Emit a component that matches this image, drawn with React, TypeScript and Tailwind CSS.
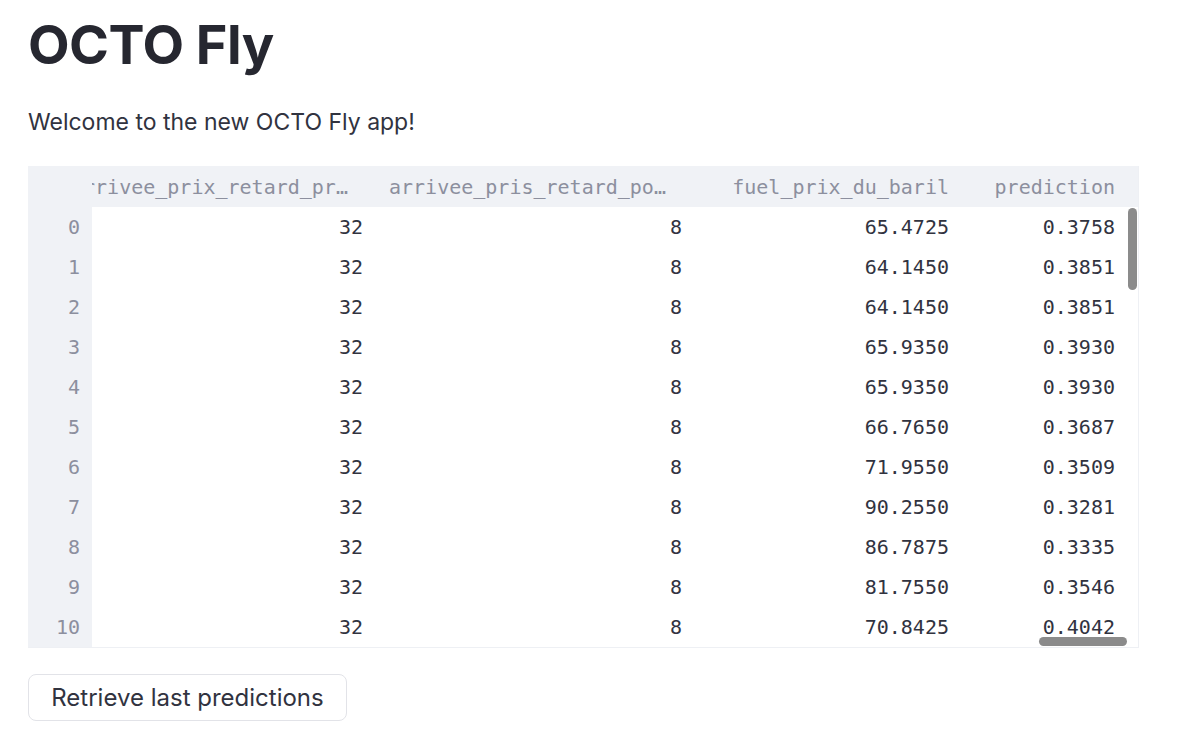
const rows = [
  { fuel: "65.4725", pred: "0.3758" },
  { fuel: "64.1450", pred: "0.3851" },
  { fuel: "64.1450", pred: "0.3851" },
  { fuel: "65.9350", pred: "0.3930" },
  { fuel: "65.9350", pred: "0.3930" },
  { fuel: "66.7650", pred: "0.3687" },
  { fuel: "71.9550", pred: "0.3509" },
  { fuel: "90.2550", pred: "0.3281" },
  { fuel: "86.7875", pred: "0.3335" },
  { fuel: "81.7550", pred: "0.3546" },
  { fuel: "70.8425", pred: "0.4042" },
];

const mono = "font-['DejaVu_Sans_Mono','Liberation_Mono',monospace]";

export default function App() {
  return (
    <div className="min-h-[748px] bg-white px-[28px] pt-[12px] font-['Inter','Noto_Sans',sans-serif] text-[#31333f]">
      <h1 className="text-[54px] font-bold leading-[66px] tracking-[-0.5px] text-[#262730]">
        OCTO Fly
      </h1>
      <p className="mt-[28px] text-[23px] leading-[32px]">Welcome to the new OCTO Fly app!</p>

      <div className="relative mt-[28px] flex w-[1111px] overflow-hidden border-r border-b border-[#eef0f4]">
        {/* index column */}
        <div className={`flex w-[64px] shrink-0 flex-col bg-[#f0f2f6] text-[20px] text-[#8c8f9e] ${mono}`}>
          <div className="h-[41px]" />
          {rows.map((_, i) => (
            <div key={i} className="flex h-[40px] items-center justify-end pr-[12px]">
              {i}
            </div>
          ))}
        </div>

        {/* scrolled data */}
        <div className={`flex-1 overflow-hidden text-[20px] ${mono}`}>
          <div className="ml-[-33px] flex">
            <Column header="arrivee_prix_retard_pr…" width="w-[318px]" values={rows.map(() => "32")} />
            <Column header="arrivee_pris_retard_po…" width="w-[319px]" values={rows.map(() => "8")} />
            <Column header="fuel_prix_du_baril" right width="w-[267px]" values={rows.map((r) => r.fuel)} />
            <Column header="prediction" right width="w-[166px]" values={rows.map((r) => r.pred)} />
            <div className="h-[41px] w-[40px] shrink-0 bg-[#f0f2f6]" />
          </div>
        </div>

        {/* scrollbars */}
        <div className="absolute top-[42px] right-[1px] h-[82px] w-[9px] rounded-full bg-[#8b8b8b]" />
        <div className="absolute right-[11px] bottom-[1px] h-[9px] w-[88px] rounded-full bg-[#8b8b8b]" />
      </div>

      <button className="mt-[26px] h-[47px] w-[319px] rounded-[8px] border border-[#e2e3e8] bg-white text-[24px] text-[#31333f]">
        Retrieve last predictions
      </button>
    </div>
  );
}

function Column({
  header,
  width,
  values,
  right,
}: {
  header: string;
  width: string;
  values: string[];
  right?: boolean;
}) {
  return (
    <div className={`flex shrink-0 flex-col ${width}`}>
      <div
        className={`flex h-[41px] items-center overflow-hidden whitespace-nowrap bg-[#f0f2f6] text-[#8c8f9e] ${
          right ? "justify-end pr-[14px]" : "pl-[12px]"
        }`}
      >
        {header}
      </div>
      {values.map((v, i) => (
        <div key={i} className="flex h-[40px] items-center justify-end pr-[14px] text-[#31333f]">
          {v}
        </div>
      ))}
    </div>
  );
}
